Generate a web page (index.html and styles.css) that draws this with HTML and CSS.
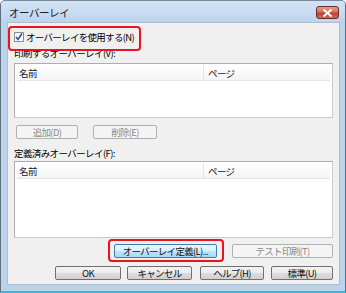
FILE: index.html
```html
<!DOCTYPE html>
<html lang="ja">
<head>
<meta charset="utf-8">
<link rel="stylesheet" href="styles.css">
</head>
<body>
<div class="window">
  <div class="titlebar">
    <span class="title">オーバーレイ</span>
    <span class="close">
      <svg width="11" height="8" viewBox="0 0 11 8"><path d="M1.5 0.5 L9.5 7.5 M9.5 0.5 L1.5 7.5" stroke="#fff" stroke-width="2" fill="none"/></svg>
    </span>
  </div>
  <div class="client">
    <div class="check-row mark">
      <span class="checkbox">
        <svg width="8" height="8" viewBox="0 0 8 8"><path d="M1 4 L3 6.5 L7 0.5" stroke="#2b4fa0" stroke-width="1.6" fill="none"/></svg>
      </span>
      <span class="check-label">オーバーレイを使用する(N)</span>
    </div>
    <div class="label">印刷するオーバーレイ(V):</div>
    <div class="list list-1">
      <div class="list-head">
        <span class="col-name">名前</span>
        <span class="col-page">ページ</span>
      </div>
    </div>
    <div class="btn-row-small">
      <span class="btn disabled w62">追加(D)</span>
      <span class="btn disabled w64">削除(E)</span>
    </div>
    <div class="label label-2">定義済みオーバーレイ(F):</div>
    <div class="list list-2">
      <div class="list-head">
        <span class="col-name">名前</span>
        <span class="col-page">ページ</span>
      </div>
    </div>
    <div class="btn-row row-1">
      <span class="btn focused mark wide">オーバーレイ定義(L)...</span>
      <span class="btn disabled wide2">テスト印刷(T)</span>
    </div>
    <div class="btn-row row-2">
      <span class="btn w66">OK</span>
      <span class="btn w65 g6">キャンセル</span>
      <span class="btn w64 g8">ヘルプ(H)</span>
      <span class="btn w62 g7">標準(U)</span>
    </div>
  </div>
</div>
</body>
</html>
```

FILE: styles.css
```css
* { box-sizing: border-box; }
html, body { margin: 0; padding: 0; }
body {
  width: 346px;
  height: 293px;
  overflow: hidden;
  background: #ffffff;
  font-family: "Noto Sans CJK JP", "Noto Sans", sans-serif;
  font-size: 10px;
  color: #000;
}
.window {
  width: 346px;
  height: 293px;
  border: 1px solid #5f6f80;
  border-top-color: #7a8a9a;
  border-bottom: 2px solid #38b8d8;
  border-radius: 5px 5px 0 0;
  background: #bcd3ec;
  padding: 0 5px 6px 6px;
  display: flex;
  flex-direction: column;
}
.titlebar {
  height: 21px;
  flex: none;
  display: flex;
  align-items: center;
  justify-content: space-between;
  background: linear-gradient(#d3e3f5, #bed4ed);
  margin: 0 -5px 0 -6px;
  padding: 0 6px 0 8px;
  border-radius: 4px 4px 0 0;
}
.title {
  font-size: 10.5px;
  letter-spacing: -0.5px;
  color: #1e1e1e;
  padding-top: 1px;
}
.close {
  width: 23px;
  height: 13px;
  margin-top: 2px;
  border: 1px solid #6a2d2d;
  border-radius: 3px;
  background: linear-gradient(#e49a8a 0%, #d47464 45%, #c0402c 55%, #cf6a50 100%);
  display: flex;
  align-items: center;
  justify-content: center;
}
.client {
  flex: 1;
  background: #f0f0f0;
  border: 1px solid #a9bdd3;
  padding: 3px 6px 0 6px;
  display: flex;
  flex-direction: column;
}
.mark { position: relative; }
.check-row {
  height: 21px;
  display: flex;
  align-items: center;
}
.check-row::after {
  content: "";
  position: absolute;
  left: -6px;
  top: 0;
  width: 129px;
  height: 21px;
  border: 2px solid #e8141e;
  border-radius: 4px;
}
.checkbox {
  width: 10px;
  height: 10px;
  border: 1px solid #8f8f8f;
  background: linear-gradient(#f0f4fa, #ffffff);
  display: flex;
  align-items: center;
  justify-content: center;
  margin-right: 2px;
}
.check-label {
  font-size: 9.5px;
  letter-spacing: -0.7px;
  line-height: 12px;
}
.label {
  height: 12px;
  line-height: 12px;
  font-size: 9.5px;
  letter-spacing: -0.6px;
}
.label-2 { margin-top: 8px; }
.list {
  background: #fff;
  border: 1px solid #abadb3;
  border-right-color: #c8cacd;
  border-bottom-color: #c8cacd;
  padding: 1px 2px 0 2px;
}
.list-1 { margin-top: 4px; height: 55px; }
.list-2 { margin-top: 2px; height: 77px; }
.list-head {
  height: 16px;
  display: flex;
  align-items: center;
  background: linear-gradient(#ffffff, #f3f4f6);
  border-bottom: 1px solid #e3e5e8;
  font-size: 9.5px;
  letter-spacing: -0.6px;
  color: #222;
}
.col-name {
  width: 187px;
  padding-left: 2px;
  height: 100%;
  display: flex;
  align-items: center;
  border-right: 1px solid #e3e5e8;
}
.col-page { padding-left: 4px; }
.btn {
  height: 14px;
  display: flex;
  align-items: center;
  justify-content: center;
  border: 1px solid #707070;
  border-radius: 2px;
  background: linear-gradient(#f3f3f3 0%, #ebebeb 48%, #dddddd 52%, #d0d0d0 100%);
  font-size: 9.5px;
  letter-spacing: -0.7px;
  color: #111;
  flex: none;
}
.btn.disabled {
  border-color: #adb2b5;
  background: #f4f4f4;
  color: #8a8a8a;
}
.btn.focused {
  border-color: #3c7fb1;
  background: linear-gradient(#eaf6fd 0%, #d9f0fc 48%, #bee6fd 52%, #a7d9f5 100%);
}
.btn-row-small {
  display: flex;
  gap: 15px;
  margin-top: 7px;
  padding-left: 2px;
}
.w62 { width: 62px; }
.w64 { width: 64px; }
.w65 { width: 65px; }
.w66 { width: 66px; }
.wide { width: 103px; }
.wide2 { width: 101px; }
.btn-row {
  display: flex;
  justify-content: flex-end;
}
.row-1 { margin-top: 6px; gap: 15px; }
.row-2 { margin-top: 8px; }
.g6 { margin-left: 6px; }
.g8 { margin-left: 8px; }
.g7 { margin-left: 7px; }
.btn.mark::after {
  content: "";
  position: absolute;
  left: -7px;
  top: -6px;
  right: -8px;
  bottom: -5px;
  border: 2px solid #e8141e;
  border-radius: 4px;
}
```
